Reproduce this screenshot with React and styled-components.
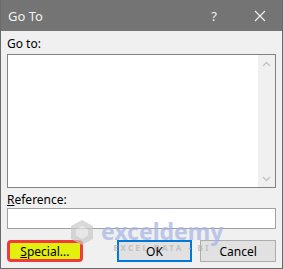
import React from "react";
import styled, { createGlobalStyle } from "styled-components";

const Global = createGlobalStyle`
  html, body { margin: 0; padding: 0; background: #ffffff; }
  body { font-family: "Noto Sans", "Liberation Sans", sans-serif; }
`;

const Dialog = styled.div`
  position: relative;
  width: 283px;
  height: 269px;
  box-sizing: border-box;
  background: #f0f0f0;
  border: 1px solid #6a6a6a;
  border-top: none;
  display: flex;
  flex-direction: column;
  overflow: hidden;
`;

const TitleBar = styled.div`
  height: 31px;
  flex: none;
  background: #747474;
  display: flex;
  align-items: center;
  padding-left: 8px;
  color: #f2f2f2;
  font-size: 13px;
  margin: 0 -1px;
`;

const Title = styled.div`
  flex: 1;
`;

const TitleButton = styled.div`
  width: ${(p) => p.w}px;
  display: flex;
  align-items: center;
  justify-content: center;
  color: #f2f2f2;
  font-size: 13px;
`;

const Body = styled.div`
  padding: 0 6px;
  display: flex;
  flex-direction: column;
  flex: 1;
`;

const Label = styled.div`
  font-size: 12px;
  line-height: 15px;
  color: #000;
  margin-top: ${(p) => p.top}px;
  margin-bottom: ${(p) => p.bottom}px;
  u { text-decoration: underline; }
`;

const ListBox = styled.div`
  height: 134px;
  box-sizing: border-box;
  border: 1px solid #828282;
  background: #fff;
  display: flex;
  justify-content: flex-end;
`;

const ScrollBar = styled.div`
  width: 17px;
  background: #f0f0f0;
  display: flex;
  flex-direction: column;
  justify-content: space-between;
  align-items: center;
  padding: 6px 0 5px;
`;

const Input = styled.div`
  height: 21px;
  box-sizing: border-box;
  border: 1px solid #a0a0a0;
  background: #fff;
`;

const ButtonRow = styled.div`
  display: flex;
  align-items: center;
  margin-top: 11px;
`;

const Button = styled.div`
  width: 76px;
  height: 22px;
  box-sizing: border-box;
  display: flex;
  align-items: center;
  justify-content: center;
  font-size: 12px;
  color: #000;
  background: ${(p) => (p.special ? "#e3ef0c" : "#e1e1e1")};
  border: ${(p) =>
    p.special ? "3px solid #ec3c3f" : p.primary ? "2px solid #0078d7" : "1px solid #adadad"};
  border-radius: ${(p) => (p.special ? "4px" : "0")};
  margin-left: ${(p) => p.ml || 0}px;
`;

const ButtonText = styled.span`
  position: relative;
  z-index: 3;
`;

const Watermark = styled.div`
  position: absolute;
  left: 69px;
  top: 219px;
  display: flex;
  align-items: flex-start;
  gap: 7px;
  opacity: 0.7;
  pointer-events: none;
  z-index: 2;
`;

const WmText = styled.div`
  display: flex;
  flex-direction: column;
  align-items: center;
`;

const WmBig = styled.div`
  font-family: "Noto Sans", sans-serif;
  font-weight: 700;
  font-size: 23px;
  line-height: 24px;
  color: #a6b3e6;
`;

const WmSmall = styled.div`
  font-family: "Noto Sans", sans-serif;
  font-weight: 700;
  font-size: 8px;
  line-height: 9px;
  color: #b4b4b4;
  letter-spacing: 2.4px;
  margin-top: 0px;
  white-space: nowrap;
`;

const Chevron = ({ up }) => (
  <svg width="9" height="6" viewBox="0 0 9 6">
    <path
      d={up ? "M1 5 L4.5 1.5 L8 5" : "M1 1 L4.5 4.5 L8 1"}
      fill="none"
      stroke="#c2c2c2"
      strokeWidth="1.4"
    />
  </svg>
);

export default function App() {
  return (
    <>
      <Global />
      <Dialog>
        <TitleBar>
          <Title>Go To</Title>
          <TitleButton w={46}>?</TitleButton>
          <TitleButton w={46}>
            <svg width="12" height="12" viewBox="0 0 12 12">
              <path d="M1 1 L11 11 M11 1 L1 11" stroke="#f2f2f2" strokeWidth="1.1" />
            </svg>
          </TitleButton>
        </TitleBar>
        <Body>
          <Label top={5} bottom={3}>Go to:</Label>
          <ListBox>
            <ScrollBar>
              <Chevron up />
              <Chevron />
            </ScrollBar>
          </ListBox>
          <Label top={4} bottom={1}>
            <u>R</u>eference:
          </Label>
          <Input />
          <ButtonRow>
            <Button special>
              <ButtonText>
                <u>S</u>pecial...
              </ButtonText>
            </Button>
            <Button primary ml={34}>
              <ButtonText>OK</ButtonText>
            </Button>
            <Button ml={8}>
              <ButtonText>Cancel</ButtonText>
            </Button>
          </ButtonRow>
        </Body>
        <Watermark>
          <svg width="24" height="27" viewBox="0 0 24 27">
            <path d="M12 1 L23 7 L23 20 L12 26 L1 20 L1 7 Z" fill="#c9c9c9" />
            <path d="M12 7 L18 10.5 L18 16.5 L12 20 L6 16.5 L6 10.5 Z" fill="#e4e4e4" />
          </svg>
          <WmText>
            <WmBig>exceldemy</WmBig>
            <WmSmall>EXCEL DATA - BI</WmSmall>
          </WmText>
        </Watermark>
      </Dialog>
    </>
  );
}
